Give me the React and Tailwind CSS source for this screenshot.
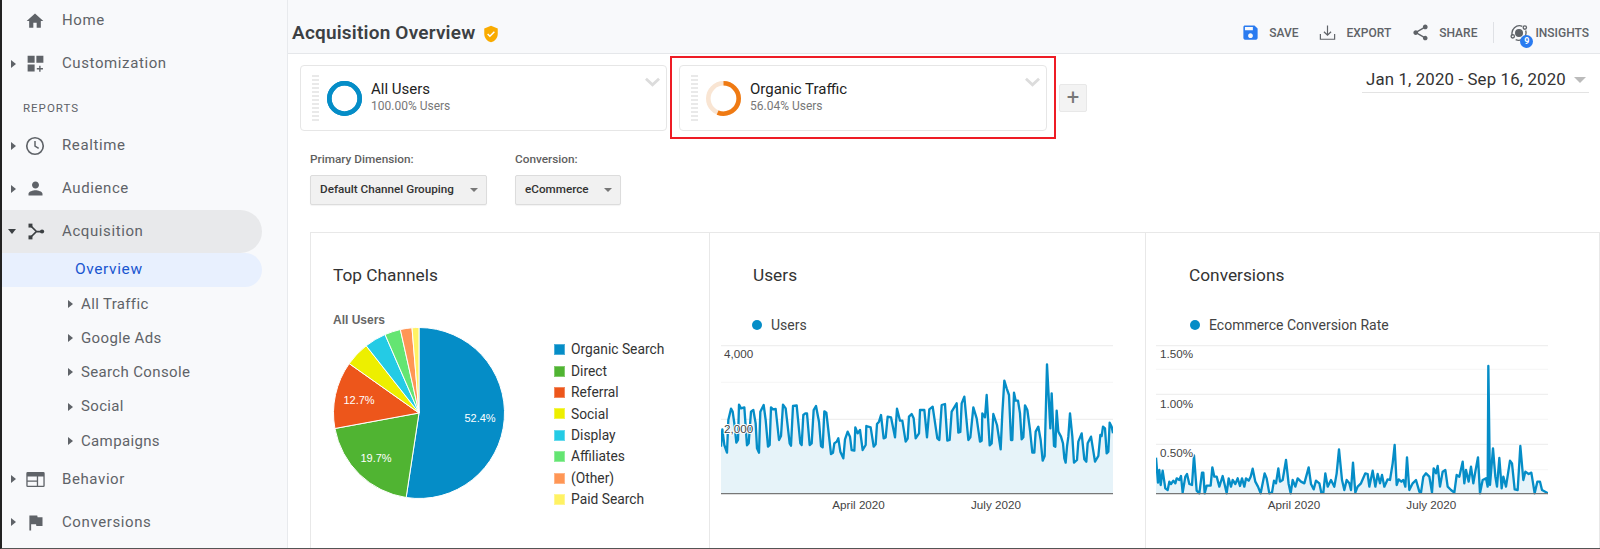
const usersLine = '78,350 82,298 88,345 96,368 100,270 108,236 113,245 118,280 124,338 129,330 132,224 138,235 148,232 156,346 161,340 168,245 175,240 182,280 186,355 192,368 196,245 206,225 212,270 219,350 224,345 228,232 234,238 242,237 252,330 258,318 264,224 272,235 284,340 288,347 294,228 305,226 316,340 320,345 325,255 331,250 336,250 344,345 350,340 356,240 363,228 372,275 378,348 383,352 388,244 394,248 400,300 408,372 414,368 418,340 425,335 430,325 436,365 445,385 450,328 458,305 465,320 470,360 478,362 481,292 488,310 495,300 503,360 512,345 514,288 527,292 536,350 542,343 546,282 552,275 558,255 566,325 572,322 578,260 588,262 600,322 606,236 615,272 622,272 632,335 638,326 642,260 650,252 656,265 662,325 672,310 675,240 688,240 696,322 703,238 713,230 727,325 733,330 740,225 750,222 757,332 764,330 770,245 785,220 790,308 796,306 800,220 808,200 820,330 826,322 835,232 845,265 855,335 860,332 862,250 870,262 875,195 884,346 890,340 895,252 906,285 917,358 922,250 928,152 935,175 942,195 948,330 952,330 957,188 962,212 969,212 975,250 980,328 985,322 990,226 997,240 1005,300 1012,368 1018,368 1022,305 1030,290 1037,330 1043,392 1049,378 1056,103 1066,295 1070,190 1077,348 1081,350 1085,242 1090,305 1098,320 1104,340 1108,385 1112,398 1116,350 1120,320 1125,250 1132,320 1137,398 1146,390 1150,335 1160,310 1168,388 1174,395 1178,340 1188,320 1200,395 1210,378 1216,315 1220,318 1224,290 1230,295 1235,370 1240,365 1244,278 1250,290 1254,310'

const convLine = '110,383 116,458 120,420 124,465 130,422 138,475 145,480 150,455 155,462 162,452 168,460 172,445 180,450 185,438 190,488 198,440 203,432 210,462 218,465 224,376 232,482 240,490 248,428 252,428 256,490 262,467 274,467 279,412 285,440 292,440 300,470 310,438 322,490 328,445 335,470 340,450 348,462 355,445 362,468 368,445 375,470 380,445 388,452 394,440 400,416 408,455 416,470 424,490 436,430 442,445 450,490 458,488 464,452 470,460 477,415 482,455 490,450 500,390 508,462 514,490 520,450 528,470 535,445 545,455 555,460 568,412 575,462 583,478 590,452 600,460 606,488 612,488 618,430 625,470 635,450 645,470 652,430 659,358 668,450 675,480 682,450 690,460 695,480 701,398 708,488 715,470 725,460 738,430 745,432 750,470 760,422 768,470 775,432 782,460 788,435 795,470 805,448 812,450 820,400 826,345 832,465 838,448 846,455 852,450 858,470 863,382 870,480 880,460 890,450 900,485 905,488 912,440 920,430 930,440 938,488 943,415 950,430 955,408 962,470 970,425 978,420 985,470 995,480 1005,488 1012,435 1020,440 1030,395 1035,460 1040,420 1048,455 1055,410 1062,460 1068,425 1076,382 1082,490 1090,450 1100,445 1105,470 1107,108 1112,465 1121,355 1128,440 1133,470 1140,384 1147,475 1152,440 1160,470 1172,392 1178,400 1186,478 1195,480 1203,348 1212,450 1218,425 1228,432 1236,428 1246,490 1254,455 1262,455 1268,480 1286,490'

const channels = [
  { name: 'Organic Search', pct: 52.4, color: '#058dc7' },
  { name: 'Direct', pct: 19.7, color: '#50b432' },
  { name: 'Referral', pct: 12.7, color: '#ed561b' },
  { name: 'Social', pct: 4.6, color: '#edef00' },
  { name: 'Display', pct: 4.1, color: '#24cbe5' },
  { name: 'Affiliates', pct: 3.0, color: '#64e572' },
  { name: '(Other)', pct: 2.2, color: '#ff9655' },
  { name: 'Paid Search', pct: 1.3, color: '#fff263' },
]

const Icon = ({ d, className = 'w-[21px] h-[21px] text-[#5f6368]' }) => (
  <svg viewBox="0 0 24 24" fill="currentColor" className={className}>
    <path d={d} fillRule="evenodd" />
  </svg>
)

const icons = {
  home: 'M10 20v-6h4v6h5v-8h3L12 3 2 12h3v8z',
  custom: 'M3 3h8v8H3zM13 3h8v8h-8zM3 13h8v8H3zM16.2 14.5h1.6v2.7h2.7v1.6h-2.7v2.7h-1.6v-2.7h-2.7v-1.6h2.7z',
  person: 'M12 12c2.21 0 4-1.79 4-4s-1.79-4-4-4-4 1.79-4 4 1.79 4 4 4zm0 2c-2.67 0-8 1.34-8 4v2h16v-2c0-2.66-5.33-4-8-4z',
  flag: 'M14.4 6L14 4H5v17h2v-7h5.6l.4 2h7V6z',
  behavior: 'M3 3.5h18a1.5 1.5 0 0 1 1.5 1.5v14a1.5 1.5 0 0 1-1.5 1.5H3A1.5 1.5 0 0 1 1.5 19V5A1.5 1.5 0 0 1 3 3.5zm0 5V19h10.5v-4.5H3V13h10.5V8.5zm12 0V19H21V8.5z',
  save: 'M17 3H5c-1.11 0-2 .9-2 2v14c0 1.1.89 2 2 2h14c1.1 0 2-.9 2-2V7l-4-4zm-5 16c-1.66 0-3-1.34-3-3s1.34-3 3-3 3 1.34 3 3-1.34 3-3 3zm3-10H5V5h10v4z',
  share: 'M18 16.08c-.76 0-1.44.3-1.96.77L8.91 12.7c.05-.23.09-.46.09-.7s-.04-.47-.09-.7l7.05-4.11c.54.5 1.25.81 2.04.81 1.66 0 3-1.34 3-3s-1.34-3-3-3-3 1.34-3 3c0 .24.04.47.09.7L8.04 9.81C7.5 9.31 6.79 9 6 9c-1.66 0-3 1.34-3 3s1.34 3 3 3c.79 0 1.5-.31 2.04-.81l7.12 4.16c-.05.21-.08.43-.08.65 0 1.61 1.31 2.92 2.92 2.92s2.92-1.31 2.92-2.92-1.31-2.92-2.92-2.92z',
}

const Clock = () => (
  <svg viewBox="0 0 24 24" fill="none" stroke="currentColor" className="w-[22px] h-[22px] text-[#5f6368]">
    <circle cx="12" cy="12" r="9" strokeWidth="1.8" />
    <path d="M12 6.5V12l4 2.5" strokeWidth="1.6" />
  </svg>
)

const Split = () => (
  <svg viewBox="0 0 24 24" fill="currentColor" stroke="currentColor" className="w-[21px] h-[21px] text-[#3c4043]">
    <path d="M7 6l6 6-6 6M13 12h6" fill="none" strokeWidth="2" />
    <rect x="4" y="3" width="4.5" height="4.5" stroke="none" />
    <rect x="4" y="16.5" width="4.5" height="4.5" stroke="none" />
    <circle cx="19.5" cy="12" r="2.4" stroke="none" />
  </svg>
)

const Caret = ({ open }) => (
  <span className={open ? 'w-0 h-0 border-x-[4px] border-x-transparent border-t-[5px] border-t-[#3c4043]' : 'w-0 h-0 border-y-[4px] border-y-transparent border-l-[5px] border-l-[#5f6368]'} />
)

const NavRow = ({ icon, label, caret, active }) => (
  <div className={'flex items-center h-[43px] rounded-r-full w-[260px] ' + (active ? 'bg-[#e8e9eb]' : '')}>
    <div className="w-[21px] flex justify-end pr-[7px]">{caret && <Caret open={active} />}</div>
    <div className="w-[24px] mr-[15px] flex justify-center">{icon}</div>
    <span className="text-[15px] tracking-[0.6px] text-[#5f6368]">{label}</span>
  </div>
)

const SubRow = ({ label }) => (
  <div className="flex items-center h-[34.2px] pl-[66px]">
    <Caret />
    <span className="ml-[8px] text-[15px] tracking-[0.35px] text-[#5f6368]">{label}</span>
  </div>
)

const Sidebar = () => (
  <aside className="w-[286px] shrink-0 bg-[#f8f9fb] border-r border-[#e8eaed] h-full">
    <div className="-mt-[1px]">
      <NavRow icon={<Icon d={icons.home} className="w-5 h-5 text-[#5f6368]" />} label="Home" />
      <NavRow caret icon={<Icon d={icons.custom} />} label="Customization" />
    </div>
    <div className="h-[39px] pt-[16px] pl-[21px] text-[11.5px] leading-[14px] tracking-[1px] text-[#5f6368]">REPORTS</div>
    <NavRow caret icon={<Clock />} label="Realtime" />
    <NavRow caret icon={<Icon d={icons.person} />} label="Audience" />
    <NavRow caret active icon={<Split />} label="Acquisition" />
    <div className="flex items-center h-[34px] w-[260px] rounded-r-full bg-[#e8f0fe] pl-[73px] text-[15.5px] tracking-[0.6px] text-[#1a56d0]">Overview</div>
    <SubRow label="All Traffic" />
    <SubRow label="Google Ads" />
    <SubRow label="Search Console" />
    <SubRow label="Social" />
    <SubRow label="Campaigns" />
    <NavRow caret icon={<Icon d={icons.behavior} />} label="Behavior" />
    <NavRow caret icon={<Icon d={icons.flag} />} label="Conversions" />
  </aside>
)

const HeaderAction = ({ icon, label }) => (
  <div className="flex items-center gap-[9px]">
    {icon}
    <span className="text-[12px] font-medium text-[#5f6368]">{label}</span>
  </div>
)

const Header = () => (
  <header className="h-[54px] bg-[#f8f9fb] border-b border-[#e5e7ea] flex items-center justify-between pl-[4px] pr-[11px] pt-[12px]">
    <div className="flex items-center gap-[7px] pt-[2px]">
      <h1 className="text-[19px] font-semibold tracking-[0.2px] text-[#3c4043]">Acquisition Overview</h1>
      <svg viewBox="0 0 24 24" className="w-[18px] h-[18px]">
        <path d="M12 1L3 4.5v7c0 5.5 3.8 10 9 11.5 5.2-1.5 9-6 9-11.5v-7z" fill="#f9ab00" />
        <path d="M7.5 12l3 3 6-6" fill="none" stroke="#fff" strokeWidth="2" />
      </svg>
    </div>
    <div className="flex items-center gap-[20px]">
      <HeaderAction icon={<Icon d={icons.save} className="w-[19px] h-[19px] text-[#2a7bf0]" />} label="SAVE" />
      <HeaderAction
        icon={
          <svg viewBox="0 0 24 24" fill="none" stroke="#5f6368" strokeWidth="1.5" className="w-[19px] h-[19px]">
            <path d="M12 3v12M7.5 11l4.5 4.5 4.5-4.5M3 14v6.5h18V14" />
          </svg>
        }
        label="EXPORT"
      />
      <HeaderAction icon={<Icon d={icons.share} className="w-[19px] h-[19px] text-[#5f6368]" />} label="SHARE" />
      <div className="w-px h-[21px] bg-[#dfe1e5] ml-[-4px] mr-[-5px]" />
      <div className="flex items-center gap-[6px]">
        <div className="relative w-[20px] h-[20px]">
          <svg viewBox="0 0 24 24" fill="none" stroke="#5f6368" strokeWidth="1.6" className="w-[20px] h-[20px]">
            <circle cx="12" cy="12" r="4" fill="#5f6368" />
            <path d="M4 15a9 9 0 0 1 12-11M20 9a9 9 0 0 1-12 11" />
            <circle cx="4.5" cy="16" r="2" />
            <circle cx="19" cy="5.5" r="2" />
          </svg>
          <span className="absolute -right-[4px] -bottom-[5px] w-[13px] h-[13px] rounded-full bg-[#2a7bf0] text-white text-[9px] font-bold leading-[13px] text-center">9</span>
        </div>
        <span className="text-[12px] font-medium text-[#5f6368]">INSIGHTS</span>
      </div>
    </div>
  </header>
)

const Chevron = () => (
  <svg viewBox="0 0 16 10" fill="none" stroke="#dcdcdc" strokeWidth="3" className="w-[15px] h-[10px]">
    <path d="M1 1.5l7 6.5 7-6.5" />
  </svg>
)

const Donut = ({ color, track, pct }) => {
  const c = 2 * Math.PI * 15.2
  return (
    <svg viewBox="0 0 35 35" className="w-[35px] h-[35px] shrink-0">
      <circle cx="17.5" cy="17.5" r="15.2" fill="none" stroke={track} strokeWidth="4.6" />
      <circle cx="17.5" cy="17.5" r="15.2" fill="none" stroke={color} strokeWidth="4.6" strokeDasharray={(c * pct) / 100 + ' ' + c} transform="rotate(-90 17.5 17.5)" />
    </svg>
  )
}

const Segment = ({ name, detail, color, track, pct, width, children }) => (
  <div className={'relative h-[66px] border border-[#e6e6e6] rounded-[4px] bg-white flex items-center pl-[11px] ' + width}>
    <div className="w-[7px] h-[46px] bg-[repeating-linear-gradient(to_bottom,#e9e9e9_0,#e9e9e9_2px,transparent_2px,transparent_4px)]" />
    <div className="ml-[8px] mr-[9px]">
      <Donut color={color} track={track} pct={pct} />
    </div>
    <div className="-mt-[3px]">
      <div className="text-[15px] leading-[19px] text-[#222]">{name}</div>
      <div className="text-[12px] leading-[15px] text-[#777]">{detail}</div>
    </div>
    <div className="absolute right-[6px] top-[11px]">
      <Chevron />
    </div>
    {children}
  </div>
)

const Dropdown = ({ label, value, width }) => (
  <div>
    <div className="text-[11.8px] leading-[14px] font-medium text-[#5f5f5f]">{label}</div>
    <div className={'mt-[9px] h-[30px] flex items-center justify-between pl-[9px] pr-[8px] bg-[#f1f1f1] border border-[#dcdcdc] rounded-[2px] shadow-[0_1px_1px_rgba(0,0,0,0.05)] ' + width}>
      <span className="text-[11.7px] font-medium text-[#333]">{value}</span>
      <span className="w-0 h-0 border-x-[4px] border-x-transparent border-t-[4px] border-t-[#777]" />
    </div>
  </div>
)

const polar = (cx, cy, r, pct) => {
  const a = (pct / 100) * 2 * Math.PI
  return [cx + r * Math.sin(a), cy - r * Math.cos(a)]
}

const Pie = () => {
  let acc = 0
  return (
    <svg width="174" height="174" viewBox="0 0 174 174" className="shrink-0 -ml-[1px] font-['Liberation_Sans',sans-serif]">
      {channels.map((c) => {
        const [x1, y1] = polar(87, 87, 85.5, acc)
        acc += c.pct
        const [x2, y2] = polar(87, 87, 85.5, acc)
        return <path key={c.name} d={`M87 87L${x1} ${y1}A85.5 85.5 0 ${c.pct > 50 ? 1 : 0} 1 ${x2} ${y2}Z`} fill={c.color} stroke="#fff" strokeWidth="1" />
      })}
      <text x="148" y="96" fontSize="11" fill="#fff" textAnchor="middle">52.4%</text>
      <text x="44" y="136" fontSize="11" fill="#fff" textAnchor="middle">19.7%</text>
      <text x="27" y="78" fontSize="11" fill="#fff" textAnchor="middle">12.7%</text>
    </svg>
  )
}

const LineChart = ({ vx, line, grid, strong, labels, months }) => {
  const left = vx
  const right = vx + 1176
  const baseY = 491
  return (
    <svg width="392" height="170" viewBox={`${vx} 45 1176 510`} className="block font-['Liberation_Sans',sans-serif]">
      {grid.map((y) => (
        <line key={y} x1={left} x2={right} y1={y} y2={y} stroke={strong.includes(y) ? '#efefef' : '#f7f7f7'} strokeWidth="4" />
      ))}
      <polygon points={`${left},${baseY} ${line} ${right},${baseY}`} fill="#e6f3f9" />
      <polyline points={line} fill="none" stroke="#058dc7" strokeWidth="7" strokeLinejoin="round" />
      <line x1={left} x2={right} y1={baseY} y2={baseY} stroke="#777" strokeWidth="4" />
      {labels.map(([text, x, y]) => (
        <text key={text} x={x} y={y} fontSize="35" fill="#444" stroke="#fff" strokeWidth="6" paintOrder="stroke">{text}</text>
      ))}
      {months.map(([text, x]) => (
        <text key={text} x={x} y="537" fontSize="35" fill="#444">{text}</text>
      ))}
    </svg>
  )
}

const Legend = ({ label }) => (
  <div className="flex items-center h-[16px] mt-[32px] text-[14px] text-[#444]">
    <span className="w-[10px] h-[10px] rounded-full bg-[#058dc7]" />
    <span className="ml-[9px]">{label}</span>
  </div>
)

const Overview = () => (
  <div className="mt-[27px] grid grid-cols-[398px_436px_436px] w-[1271px] flex-1 border-t border-x border-[#e8e8e8]">
    <section className="pl-[22px] pt-[32px]">
      <h2 className="text-[17.3px] leading-[20px] text-[#333]">Top Channels</h2>
      <div className="mt-[28px] text-[12px] leading-[14px] font-bold text-[#666] font-['Liberation_Sans',sans-serif]">All Users</div>
      <div className="flex -mt-[1px]">
        <Pie />
        <ul className="ml-[48px] mt-[13px]">
          {channels.map((c) => (
            <li key={c.name} className="flex items-center h-[21.4px] text-[13.8px] text-[#333]">
              <span className="w-[11px] h-[11px] border border-white/30" style={{ backgroundColor: c.color }} />
              <span className="ml-[6px]">{c.name}</span>
            </li>
          ))}
        </ul>
      </div>
    </section>
    <section className="border-l border-[#e8e8e8] pt-[32px]">
      <h2 className="pl-[43px] text-[17.3px] leading-[20px] text-[#333]">Users</h2>
      <div className="pl-[42px]">
        <Legend label="Users" />
      </div>
      <div className="ml-[11px] mt-[12px]">
        <LineChart
          vx={78}
          line={usersLine}
          grid={[47, 157, 268, 379]}
          strong={[47, 268]}
          labels={[['4,000', 87, 85], ['2,000', 87, 308]]}
          months={[['April 2020', 412], ['July 2020', 828]]}
        />
      </div>
    </section>
    <section className="border-l border-[#e8e8e8] pt-[32px]">
      <h2 className="pl-[43px] text-[17.3px] leading-[20px] text-[#333]">Conversions</h2>
      <div className="pl-[44px]">
        <Legend label="Ecommerce Conversion Rate" />
      </div>
      <div className="ml-[10px] mt-[12px]">
        <LineChart
          vx={110}
          line={convLine}
          grid={[47, 118, 193, 268, 343, 419]}
          strong={[47, 193, 343]}
          labels={[['1.50%', 122, 85], ['1.00%', 122, 233], ['0.50%', 122, 382]]}
          months={[['April 2020', 445], ['July 2020', 861]]}
        />
      </div>
    </section>
  </div>
)

export default function App() {
  return (
    <div className="w-[1600px] h-[549px] overflow-hidden flex bg-white border-l-2 border-l-[#222] border-b border-b-[#555] font-['Roboto',sans-serif]">
      <Sidebar />
      <main className="flex-1 flex flex-col min-w-0">
        <Header />
        <div className="flex-1 flex flex-col pl-[12px] pt-[11px] min-h-0">
          <div className="flex">
            <Segment name="All Users" detail="100.00% Users" color="#058dc7" track="#058dc7" pct={100} width="w-[367px]" />
            <div className="ml-[12px]">
              <Segment name="Organic Traffic" detail="56.04% Users" color="#ef7a13" track="#f9e5d3" pct={56} width="w-[368px]">
                <div className="absolute -left-[10px] -top-[10px] -right-[10px] -bottom-[9px] border-2 border-[#ee1c25] pointer-events-none" />
              </Segment>
            </div>
            <div className="ml-[12px] mt-[19px] w-[28px] h-[28px] bg-[#f3f3f3] border border-[#e8e8e8] rounded-[2px] flex items-center justify-center text-[22px] leading-none text-[#777]">+</div>
            <div className="ml-[275px] w-[227px] h-[28px] pt-[3px] border-b border-[#e3e3e3] flex items-center pl-[4px] gap-[8px]">
              <span className="text-[16.8px] tracking-[0.15px] text-[#333] whitespace-nowrap">Jan 1, 2020 - Sep 16, 2020</span>
              <span className="w-0 h-0 border-x-[6px] border-x-transparent border-t-[6px] border-t-[#bbb]" />
            </div>
          </div>
          <div className="mt-[21px] ml-[10px] flex gap-[28px]">
            <Dropdown label="Primary Dimension:" value="Default Channel Grouping" width="w-[177px]" />
            <Dropdown label="Conversion:" value="eCommerce" width="w-[106px]" />
          </div>
          <div className="ml-[10px] flex-1 flex min-h-0">
            <Overview />
          </div>
        </div>
      </main>
    </div>
  )
}
